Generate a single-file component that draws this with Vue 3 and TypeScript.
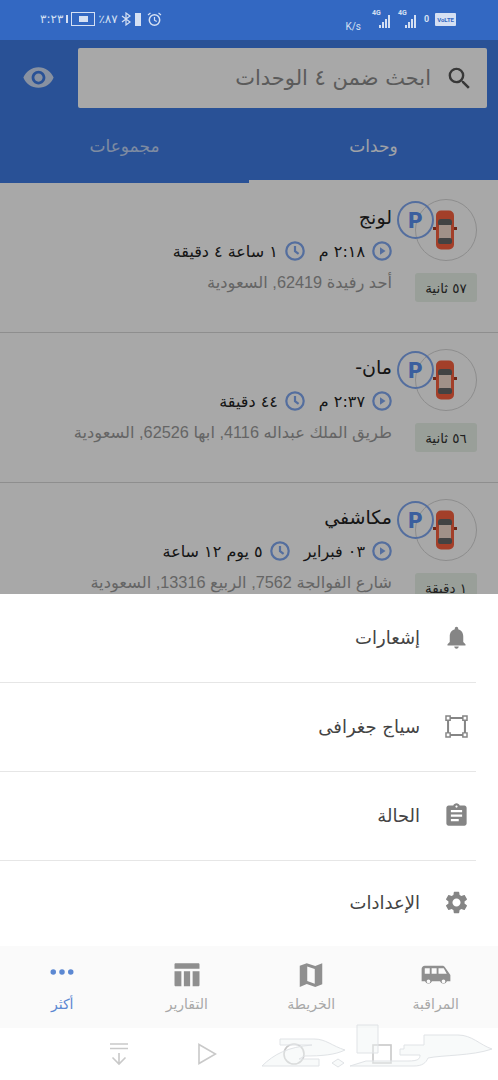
<template>
  <div class="phone">
    <div class="status-bar">
      <div class="status-group">
        <span class="clock-text">٣:٢٣</span>
        <span class="sim-bar"></span>
        <span class="vid-box"><i></i></span>
        <span class="pct">٪٨٧</span>
        <svg width="11" height="14" viewBox="0 0 11 14"><path d="M1 4l8 6-4 3V1l4 3-8 6" fill="none" stroke="#d5e0f3" stroke-width="1.2" /></svg>
        <span class="battery"></span>
        <svg width="15" height="15" viewBox="0 0 15 15"><circle cx="7.5" cy="8" r="5.2" fill="none" stroke="#d5e0f3" stroke-width="1.5" /><path d="M7.5 5v3.2l2.2 1.4M1 3l2.5-2M14 3l-2.5-2" fill="none" stroke="#d5e0f3" stroke-width="1.2" /></svg>
      </div>
      <div class="status-group status-right">
        <span class="speed">K/s</span>
        <span v-for="n in 2" :key="n" class="signal">
          <b>4G</b>
          <i v-for="h in [3, 6, 9, 13]" :key="h" :style="{ height: h + 'px' }"></i>
        </span>
        <span class="sim-num">0</span>
        <span class="volte">VoLTE</span>
      </div>
    </div>

    <div class="main">
      <header class="app-header">
        <div class="search-row">
          <div class="search-box">
            <svg class="search-icon" viewBox="0 0 24 24"><path :d="icons.search" /></svg>
            <span>ابحث ضمن ٤ الوحدات</span>
          </div>
          <svg class="eye-icon" viewBox="0 0 24 24"><path :d="icons.eye" /></svg>
        </div>
        <div class="tabs">
          <div class="tab tab--active">وحدات</div>
          <div class="tab">مجموعات</div>
        </div>
      </header>

      <div class="unit-list">
        <div v-for="unit in units" :key="unit.name" class="unit">
          <div class="unit-side">
            <div class="car-ring">
              <svg class="car" viewBox="0 0 24 40">
                <path d="M0 17h4v3H0zM20 17h4v3h-4z" fill="#a83a22" />
                <rect x="3" y="0.5" width="18" height="39" rx="5" fill="#f8603f" />
                <rect x="5" y="9" width="14" height="7" rx="3" fill="#666" />
                <rect x="6" y="15" width="12" height="14" fill="#f5dccf" />
                <rect x="5" y="28" width="14" height="6" rx="2" fill="#666" />
              </svg>
              <div class="park-badge">P</div>
            </div>
            <div class="age">{{ unit.age }}</div>
          </div>
          <div class="unit-body">
            <div class="unit-name">{{ unit.name }}</div>
            <div class="unit-times">
              <svg class="round-icon" viewBox="0 0 20 20"><circle cx="10" cy="10" r="8.700" /><path d="M8 6.200l5.500 3.800L8 13.800z" class="fill" /></svg>
              <span class="time-text">{{ unit.start }}</span>
              <svg class="round-icon" viewBox="0 0 20 20"><circle cx="10" cy="10" r="8.700" /><path d="M10 5v5.200l3.600 2.600" /></svg>
              <span class="time-text">{{ unit.duration }}</span>
            </div>
            <div class="unit-address">{{ unit.address }}</div>
          </div>
        </div>
      </div>

      <div class="scrim"></div>
    </div>

    <div class="sheet">
      <div v-for="item in menu" :key="item.label" class="menu-item">
        <svg class="menu-icon" viewBox="0 0 24 24"><path :d="item.icon" /></svg>
        <span>{{ item.label }}</span>
      </div>
    </div>

    <nav class="bottom-tabs">
      <div v-for="tab in tabs" :key="tab.label" class="bottom-tab" :class="{ 'bottom-tab--active': tab.active }">
        <svg class="bottom-icon" viewBox="0 0 24 24"><path :d="tab.icon" /></svg>
        <span>{{ tab.label }}</span>
      </div>
    </nav>

    <div class="system-nav">
      <svg width="20" height="24" viewBox="0 0 20 24" class="nav-down"><path d="M1 2h18M1 6.500h18M10 11v11M3.500 15.500L10 22l6.500-6.500" fill="none" stroke="#c9c9c9" stroke-width="1.600" /></svg>
      <svg width="20" height="22" viewBox="0 0 20 22" class="nav-play"><path d="M2 1.500L18.500 11 2 20.500z" fill="none" stroke="#c9c9c9" stroke-width="1.600" /></svg>
      <svg width="22" height="22" viewBox="0 0 22 22" class="nav-circle"><circle cx="11" cy="11" r="10" fill="none" stroke="#c9c9c9" stroke-width="1.600" /></svg>
      <svg width="20" height="20" viewBox="0 0 20 20" class="nav-square"><rect x="1" y="1" width="18" height="18" fill="none" stroke="#c9c9c9" stroke-width="1.600" /></svg>
      <!-- faint site watermark over the nav bar -->
      <svg class="watermark" width="248" height="52" viewBox="0 0 248 52">
        <path d="M12 44C24 32 38 25 62 23H30v-6h34c12 0 18 7 31 11-10 5-24 6-40 6l-6 3h20v7z" />
        <path d="M107 3h21v28h-21z" />
        <path d="M100 44l16-5h42c10 0 12-2 12-6h-20v-6h4v-4h20v-10h34c14 0 22 10 34 14-20 7-50 6-64 9-2 5-6 8-14 8z" />
        <path d="M88 45l-6-4 6-4 6 4z" />
      </svg>
    </div>
  </div>
</template>

<script setup lang="ts">
interface Unit {
  name: string;
  start: string;
  duration: string;
  address: string;
  age: string;
}

const icons = {
  search:
    "M15.5 14h-.79l-.28-.27A6.471 6.471 0 0 0 16 9.5 6.5 6.5 0 1 0 9.5 16c1.61 0 3.09-.59 4.23-1.57l.27.28v.79l5 4.99L20.49 19l-4.99-5zm-6 0C7.01 14 5 11.99 5 9.5S7.01 5 9.5 5 14 7.01 14 9.5 11.99 14 9.5 14z",
  eye: "M12 4.5C7 4.5 2.73 7.61 1 12c1.73 4.39 6 7.5 11 7.5s9.27-3.11 11-7.5c-1.73-4.39-6-7.5-11-7.5zM12 17c-2.76 0-5-2.24-5-5s2.24-5 5-5 5 2.24 5 5-2.24 5-5 5zm0-8c-1.66 0-3 1.34-3 3s1.34 3 3 3 3-1.34 3-3-1.34-3-3-3z",
};

const units: Unit[] = [
  { name: "لونج", start: "٢:١٨ م", duration: "١ ساعة ٤ دقيقة", address: "أحد رفيدة 62419, السعودية", age: "٥٧ ثانية" },
  { name: "مان-", start: "٢:٣٧ م", duration: "٤٤ دقيقة", address: "طريق الملك عبداله 4116, ابها 62526, السعودية", age: "٥٦ ثانية" },
  { name: "مكاشفي", start: "٠٣ فبراير", duration: "٥ يوم ١٢ ساعة", address: "شارع الفوالجة 7562, الربيع 13316, السعودية", age: "١ دقيقة" },
];

const menu = [
  {
    label: "إشعارات",
    icon: "M12 22c1.1 0 2-.9 2-2h-4c0 1.1.89 2 2 2zm6-6v-5c0-3.07-1.64-5.64-4.5-6.32V4c0-.83-.67-1.5-1.5-1.5s-1.5.67-1.5 1.5v.68C7.63 5.36 6 7.92 6 11v5l-2 2v1h16v-1l-2-2z",
  },
  {
    label: "سياج جغرافى",
    icon: "M2 2h5v5H2zM3.300 3.300v2.400h2.400V3.300zM17 2h5v5h-5zM18.300 3.300v2.400h2.400V3.300zM2 17h5v5H2zM3.300 18.300v2.400h2.400v-2.400zM17 17h5v5h-5zM18.300 18.300v2.400h2.400v-2.400zM7 3.600h10v1.800H7zM7 18.600h10v1.800H7zM3.600 7h1.800v10H3.600zM18.600 7h1.800v10h-1.800z",
  },
  {
    label: "الحالة",
    icon: "M19 3h-4.18C14.4 1.84 13.3 1 12 1c-1.3 0-2.4.84-2.82 2H5c-1.1 0-2 .9-2 2v14c0 1.1.9 2 2 2h14c1.1 0 2-.9 2-2V5c0-1.1-.9-2-2-2zm-7 0c.55 0 1 .45 1 1s-.45 1-1 1-1-.45-1-1 .45-1 1-1zm2 14H7v-2h7v2zm3-4H7v-2h10v2zm0-4H7V7h10v2z",
  },
  {
    label: "الإعدادات",
    icon: "M19.14 12.94c.04-.3.06-.61.06-.94 0-.32-.02-.64-.07-.94l2.03-1.58c.18-.14.23-.41.12-.61l-1.92-3.32c-.12-.22-.37-.29-.59-.22l-2.39.96c-.5-.38-1.03-.7-1.62-.94l-.36-2.54c-.04-.24-.24-.41-.48-.41h-3.84c-.24 0-.43.17-.47.41l-.36 2.54c-.59.24-1.13.57-1.62.94l-2.39-.96c-.22-.08-.47 0-.59.22L2.74 8.87c-.12.21-.08.47.12.61l2.03 1.58c-.05.3-.09.63-.09.94s.02.64.07.94l-2.03 1.58c-.18.14-.23.41-.12.61l1.92 3.32c.12.22.37.29.59.22l2.39-.96c.5.38 1.03.7 1.62.94l.36 2.54c.05.24.24.41.48.41h3.84c.24 0 .44-.17.47-.41l.36-2.54c.59-.24 1.13-.56 1.62-.94l2.39.96c.22.08.47 0 .59-.22l1.92-3.32c.12-.22.07-.47-.12-.61l-2.01-1.58zM12 15.6c-1.98 0-3.6-1.62-3.6-3.6s1.62-3.6 3.6-3.6 3.6 1.62 3.6 3.6-1.62 3.6-3.6 3.6z",
  },
];

const tabs = [
  {
    label: "المراقبة",
    icon: "M3 4.500h14c1 0 1.800.5 2.300 1.400L23.500 12v5h-2.700a3 3 0 0 1-5.600 0H8.800a3 3 0 0 1-5.600 0H.5V7c0-1.400 1.100-2.500 2.500-2.500zm0 2V11h4V6.500H3zm5.500 0V11h4V6.500h-4zm5.500 0V11h6.600l-2.400-4.500H14zM6 15.500a1.500 1.500 0 1 0 0 3 1.500 1.500 0 0 0 0-3zm12 0a1.500 1.500 0 1 0 0 3 1.500 1.500 0 0 0 0-3z",
  },
  {
    label: "الخريطة",
    icon: "M21 2.500l-5.600 2.300L8.600 2.500 3 4.600V21.500l5.600-2.300 6.800 2.300 5.600-2.100V2.500zM15 18.900l-6-2.100V5.100l6 2.100v11.700z",
  },
  {
    label: "التقارير",
    icon: "M3 2.500h18c.6 0 1 .4 1 1v3.500H2V3.500c0-.6.4-1 1-1zM2 9h5.500v12H3c-.6 0-1-.4-1-1V9zm7.500 0h5v12h-5V9zm7 0H22v11c0 .6-.4 1-1 1h-4.500V9z",
  },
  {
    label: "أكثر",
    active: true,
    icon: "M5 7.400a2.200 2.200 0 1 0 0 4.400 2.200 2.200 0 0 0 0-4.400zm7 0a2.200 2.200 0 1 0 0 4.400 2.200 2.200 0 0 0 0-4.400zm7 0a2.200 2.200 0 1 0 0 4.400 2.200 2.200 0 0 0 0-4.400z",
  },
];
</script>

<style scoped>
.phone {
  width: 498px;
  height: 1080px;
  display: flex;
  flex-direction: column;
  overflow: hidden;
  background: #fff;
  font-family: "DejaVu Sans", "Noto Sans", sans-serif;
}

.status-bar {
  height: 40px;
  box-sizing: border-box;
  flex: none;
  display: flex;
  justify-content: space-between;
  align-items: center;
  padding: 0 42px 2px 40px;
  background: #3368c2;
  color: #d5e0f3;
  font-size: 10px;
}
.status-group {
  display: flex;
  align-items: center;
  gap: 3px;
}
.status-right {
  gap: 6px;
}
.clock-text,
.pct {
  font-size: 12px;
}
.sim-bar {
  width: 2px;
  height: 8px;
  background: #d5e0f3;
}
.vid-box {
  width: 22px;
  height: 12px;
  border: 1px solid #d5e0f3;
  display: flex;
  align-items: center;
  justify-content: center;
}
.vid-box i {
  width: 9px;
  height: 6px;
  background: #d5e0f3;
}
.battery {
  width: 6px;
  height: 13px;
  background: #d5e0f3;
  margin-right: 3px;
}
.speed {
  font-family: Roboto, sans-serif;
  font-size: 10px;
  margin-top: 14px;
  margin-right: 5px;
}
.signal {
  display: flex;
  align-items: flex-end;
  gap: 1px;
  height: 18px;
  width: 20px;
  box-sizing: border-box;
  position: relative;
  padding-left: 7px;
}
.signal b {
  position: absolute;
  left: 0;
  top: -1px;
  font: bold 7px Roboto, sans-serif;
}
.signal i {
  width: 2px;
  background: #d5e0f3;
}
.sim-num {
  font: bold 9px Roboto, sans-serif;
}
.volte {
  background: #d5e0f3;
  color: #3368c2;
  font: bold 6px Roboto, sans-serif;
  padding: 3px 2px;
  border-radius: 1px;
}

.main {
  flex: 1;
  min-height: 0;
  position: relative;
  overflow: hidden;
  background: #fff;
}
.scrim {
  position: absolute;
  inset: 0;
  background: rgba(0, 0, 0, 0.34);
}

.app-header {
  height: 143px;
  background: #3f7ce4;
  display: flex;
  flex-direction: column;
}
.search-row {
  height: 68px;
  flex: none;
  display: flex;
  flex-direction: row-reverse;
  align-items: flex-end;
  padding: 0 11px 0 22px;
  gap: 23px;
}
.search-box {
  flex: 1;
  height: 60px;
  background: #fff;
  border-radius: 2px;
  display: flex;
  flex-direction: row-reverse;
  align-items: center;
  gap: 14px;
  padding-right: 13px;
  direction: ltr;
  color: #8a8a8a;
  font-size: 21px;
}
.search-icon {
  width: 29px;
  height: 29px;
  fill: #555;
}
.eye-icon {
  width: 33px;
  height: 33px;
  fill: #cfddf5;
  margin-bottom: 14px;
}
.tabs {
  flex: 1;
  display: flex;
  flex-direction: row-reverse;
}
.tab {
  flex: 1;
  box-sizing: border-box;
  display: flex;
  align-items: center;
  justify-content: center;
  padding-top: 4px;
  font-size: 17px;
  color: #c0d4f5;
  border-bottom: 3px solid transparent;
}
.tab--active {
  color: #f2f6fd;
  border-bottom-color: #fff;
}

.unit-list {
  display: flex;
  flex-direction: column;
}
.unit {
  height: 150px;
  flex: none;
  display: flex;
  flex-direction: row-reverse;
  gap: 23px;
  padding: 16px 21px 0 0;
  border-bottom: 1px solid #d8d8d8;
  box-sizing: border-box;
}
.unit-side {
  width: 62px;
  flex: none;
  display: flex;
  flex-direction: column;
  gap: 12px;
}
.car-ring {
  width: 60px;
  height: 60px;
  border: 1px solid #d6d6d6;
  border-radius: 50%;
  position: relative;
  display: flex;
  align-items: center;
  justify-content: center;
}
.car {
  width: 24px;
  height: 40px;
  margin-right: 3px;
}
.park-badge {
  position: absolute;
  left: -19px;
  top: 1px;
  width: 33px;
  height: 34px;
  border: 2px solid #80a8f0;
  border-radius: 50%;
  display: flex;
  align-items: center;
  justify-content: center;
  color: #5a90f0;
  font: 900 22px Roboto, sans-serif;
}
.age {
  height: 29px;
  border-radius: 3px;
  background: #e8f2e8;
  color: #333;
  font-size: 13.5px;
  display: flex;
  align-items: center;
  justify-content: center;
  direction: rtl;
}
.unit-body {
  flex: 1;
  min-width: 0;
  display: flex;
  flex-direction: column;
  direction: rtl;
  padding-top: 3px;
}
.unit-name {
  font-size: 19px;
  line-height: 30px;
  color: #222;
}
.unit-times {
  display: flex;
  align-items: center;
  margin-top: 8px;
  height: 22px;
  color: #222;
  font-size: 16px;
  gap: 7px;
}
.time-text {
  margin-left: 7px;
}
.round-icon {
  width: 20px;
  height: 20px;
  flex: none;
}
.round-icon circle,
.round-icon path {
  fill: none;
  stroke: #80a8f0;
  stroke-width: 2.2;
}
.round-icon path.fill {
  fill: #80a8f0;
  stroke: none;
}
.unit-address {
  margin-top: 11px;
  font-size: 16.3px;
  color: #9a9a9a;
  font-family: "Liberation Sans", "DejaVu Sans", sans-serif;
}

.sheet {
  height: 352px;
  flex: none;
  background: #fff;
  display: flex;
  flex-direction: column;
}
.menu-item {
  height: 89px;
  box-sizing: border-box;
  flex: none;
  display: flex;
  flex-direction: row-reverse;
  align-items: center;
  gap: 23px;
  margin-right: 22px;
  padding: 0 6px 2px 0;
  border-bottom: 1px solid #e6e6e6;
  font-size: 18px;
  color: #444;
  direction: ltr;
}
.menu-item:last-child {
  flex: 1;
  height: auto;
  border-bottom: none;
}
.menu-icon {
  width: 27px;
  height: 27px;
  fill: #858585;
  flex: none;
}

.bottom-tabs {
  height: 82px;
  flex: none;
  background: #fafafa;
  display: flex;
  flex-direction: row-reverse;
}
.bottom-tab {
  flex: 1;
  display: flex;
  flex-direction: column;
  align-items: center;
  padding-top: 14px;
  gap: 6px;
  color: #a8a8a8;
  font-size: 14px;
}
.bottom-tab--active {
  color: #5c88d2;
}
.bottom-icon {
  width: 30px;
  height: 30px;
  fill: #8f8f8f;
}
.bottom-tab--active .bottom-icon {
  fill: #5c88d2;
}

.system-nav {
  height: 52px;
  flex: none;
  position: relative;
  background: #fff;
  display: flex;
  align-items: center;
  padding-left: 109px;
}
.nav-play {
  margin-left: 68px;
}
.nav-circle {
  margin-left: 66px;
}
.nav-square {
  margin-left: 67px;
}
.watermark {
  position: absolute;
  left: 250px;
  top: -6px;
}
.watermark path {
  fill: rgba(240, 243, 245, 0.45);
  stroke: #e0e3e6;
  stroke-width: 1;
}
</style>
